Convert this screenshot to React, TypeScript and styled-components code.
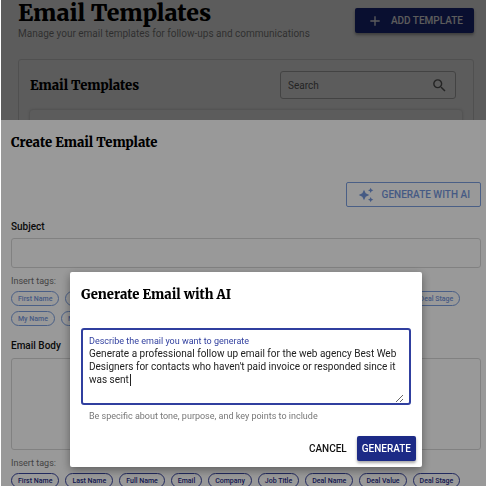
import React, { useState } from "react";
import styled, { createGlobalStyle } from "styled-components";

const serif = `Merriweather, "DejaVu Serif Condensed", "DejaVu Serif", serif`;

const GlobalStyle = createGlobalStyle`
  *, *::before, *::after { box-sizing: border-box; }
  body {
    margin: 0;
    background: #fff;
    color: #000;
    font-family: Roboto, "Liberation Sans", sans-serif;
    overflow: hidden;
  }
  button, input, textarea { font-family: inherit; }
  h1, h2, p { margin: 0; }
`;

const Page = styled.main`
  min-height: 100vh;
  padding: 0 12px 0 18px;
`;

const PageHeader = styled.header`
  display: flex;
  justify-content: space-between;
  align-items: flex-start;
`;

const PageTitle = styled.h1`
  font: 900 23px/26px ${serif};
  white-space: nowrap;
`;

const Subtitle = styled.p`
  font-size: 10px;
  line-height: 16px;
  color: rgba(0, 0, 0, 0.5);
  white-space: nowrap;
`;

const Button = styled.button<{ $kind: "solid" | "outline" | "text" }>`
  display: inline-flex;
  align-items: center;
  justify-content: center;
  height: 25px;
  padding: 0 10px 0 11px;
  border: 1px solid ${(p) => (p.$kind === "outline" ? "#7c9fe0" : "transparent")};
  border-radius: 2px;
  background: ${(p) => (p.$kind === "solid" ? "#1c2a86" : "transparent")};
  color: ${(p) => (p.$kind === "solid" ? "#fff" : p.$kind === "outline" ? "#7496dc" : "#111")};
  box-shadow: ${(p) => (p.$kind === "solid" ? "0 2px 3px rgba(0, 0, 0, 0.35)" : "none")};
  font-size: 10px;
  font-weight: 500;
  line-height: 16px;
  text-transform: uppercase;
  white-space: nowrap;
  cursor: pointer;
  svg { flex: none; margin-right: 8px; fill: currentColor; }
`;

const AddButton = styled(Button)`
  margin-top: 8px;
`;

const Card = styled.section`
  margin-top: 17px;
  padding: 11px;
  border: 1px solid #e0e0e0;
  border-radius: 3px;
`;

const CardHeader = styled.div`
  display: flex;
  justify-content: space-between;
  align-items: center;
  padding-right: 6px;
`;

const SectionTitle = styled.h2`
  padding-top: 2px;
  font: 900 13px/20px ${serif};
  white-space: nowrap;
`;

const SearchBox = styled.label`
  display: flex;
  align-items: center;
  width: 176px;
  height: 28px;
  padding: 0 7px;
  border: 1px solid #bdbdbd;
  border-radius: 3px;
  svg { flex: none; fill: #666; }
`;

const SearchInput = styled.input`
  flex: 1;
  min-width: 0;
  padding: 0;
  border: 0;
  outline: 0;
  background: none;
  font-size: 10px;
  &::placeholder { color: #666; opacity: 1; }
`;

const Paper = styled.div`
  height: 300px;
  margin-top: 11px;
  border-radius: 3px;
  box-shadow: 0 0 3px rgba(0, 0, 0, 0.25);
`;

const Layer = styled.div`
  position: fixed;
  inset: 0 0 0 1px;
  display: flex;
  justify-content: center;
  align-items: flex-end;
  background: rgba(0, 0, 0, 0.4);
`;

const DialogLayer = styled(Layer)`
  padding: 0 0 19px 5px;
`;

const Sheet = styled.section`
  width: 100%;
  height: calc(100% - 120px);
  padding: 11px 5px 0 10px;
  overflow: hidden;
  background: #fff;
`;

const SheetActions = styled.div`
  display: flex;
  justify-content: flex-end;
  margin-top: 29px;
`;

const Field = styled.div`
  display: flex;
  flex-direction: column;
  margin-top: 12px;
`;

const FieldLabel = styled.label`
  font-size: 10px;
  font-weight: 500;
  line-height: 16px;
  color: #111;
`;

const SubjectInput = styled.input`
  height: 30px;
  margin-top: 3px;
  padding: 0 8px;
  border: 1px solid #d8d8d8;
  border-radius: 3px;
  font-size: 10px;
`;

const BodyInput = styled.textarea`
  height: 92px;
  margin-top: 4px;
  padding: 8px;
  border: 1px solid #d8d8d8;
  border-radius: 3px;
  resize: none;
  font-size: 10px;
`;

const TagHint = styled.p`
  margin-top: 6px;
  font-size: 9px;
  line-height: 14px;
  color: #707070;
`;

const Tags = styled.div`
  display: flex;
  flex-wrap: wrap;
  gap: 5px 6px;
  margin-top: 3px;
  padding-right: 10px;
`;

const Tag = styled.button<{ $strong?: boolean }>`
  height: 15px;
  padding: 0 6px;
  border: 1px solid ${(p) => (p.$strong ? "#3a469e" : "#7c9fe0")};
  border-radius: 8px;
  background: none;
  color: ${(p) => (p.$strong ? "#1c2a86" : "#7496dc")};
  font-size: 7px;
  font-weight: 500;
  line-height: 12px;
  white-space: nowrap;
`;

const Dialog = styled.form`
  display: flex;
  flex-direction: column;
  width: 352px;
  padding: 11px 6px 6px 11px;
  border-radius: 2px;
  background: #fff;
  box-shadow: 0 3px 10px rgba(0, 0, 0, 0.4);
`;

const PromptBox = styled.div`
  position: relative;
  display: flex;
  flex-direction: column;
  margin: 23px 5px 0 0;
  padding: 5px 5px 0 6px;
  border: 2px solid #303f9f;
  border-radius: 3px;
`;

const PromptLabel = styled.label`
  font-size: 9px;
  line-height: 12px;
  color: #303f9f;
`;

const Prompt = styled.textarea<{ $edited: boolean }>`
  height: 56px;
  padding: 0;
  border: 0;
  outline: 0;
  background: none;
  color: #222;
  caret-color: ${(p) => (p.$edited ? "auto" : "transparent")};
  font-size: 10px;
  line-height: 13px;
  resize: vertical;
`;

/* Steady caret shown after the suggested prompt until the first edit. */
const Caret = styled.span`
  position: absolute;
  top: 44px;
  left: 47px;
  width: 1px;
  height: 12px;
  background: #222;
  pointer-events: none;
`;

const Helper = styled.p`
  margin: 4px 0 0 8px;
  font-size: 9px;
  line-height: 14px;
  color: #777;
`;

const DialogActions = styled.div`
  display: flex;
  justify-content: flex-end;
  gap: 5px;
  margin-top: 13px;
`;

const DialogButton = styled(Button)`
  padding: 0 4px;
`;

const names = ["First Name", "Last Name", "Full Name", "Email", "Company", "Job Title", "Deal Name", "Deal Value", "Deal Stage", "My Name", "My Email"];

const TagList = ({ strong }: { strong?: boolean }) => (
  <>
    <TagHint>Insert tags:</TagHint>
    <Tags>
      {names.map((name) => (
        <Tag key={name} type="button" $strong={strong}>{name}</Tag>
      ))}
    </Tags>
  </>
);

export default function App() {
  const [edited, setEdited] = useState(false);
  const [prompt, setPrompt] = useState(
    "Generate a professional follow up email for the web agency Best Web Designers for contacts who haven't paid invoice or responded since it was sent"
  );
  return (
    <>
      <GlobalStyle />
      <Page>
        <PageHeader>
          <div>
            <PageTitle>Email Templates</PageTitle>
            <Subtitle>Manage your email templates for follow-ups and communications</Subtitle>
          </div>
          <AddButton type="button" $kind="solid">
            <svg width="16" height="16" viewBox="0 0 24 24"><path d="M19 13h-6v6h-2v-6H5v-2h6V5h2v6h6z" /></svg>
            Add Template
          </AddButton>
        </PageHeader>
        <Card>
          <CardHeader>
            <SectionTitle>Email Templates</SectionTitle>
            <SearchBox>
              <SearchInput type="search" placeholder="Search" aria-label="Search" />
              <svg width="17" height="17" viewBox="0 0 24 24"><path d="M15.5 14h-.79l-.28-.27A6.47 6.47 0 0 0 16 9.5 6.5 6.5 0 1 0 9.5 16c1.61 0 3.09-.59 4.23-1.57l.27.28v.79l5 4.99L20.49 19zm-6 0C7.01 14 5 11.99 5 9.5S7.01 5 9.5 5 14 7.01 14 9.5 11.99 14 9.5 14" /></svg>
            </SearchBox>
          </CardHeader>
          <Paper />
        </Card>
      </Page>

      <Layer>
        <Sheet>
          <SectionTitle>Create Email Template</SectionTitle>
          <SheetActions>
            <Button type="button" $kind="outline">
              <svg width="16" height="16" viewBox="0 0 24 24"><path d="m19 9 1.25-2.75L23 5l-2.75-1.25L19 1l-1.25 2.75L15 5l2.75 1.25zm0 6-1.25 2.75L15 19l2.75 1.25L19 23l1.25-2.75L23 19l-2.75-1.25zM11.5 9.5 9 4 6.5 9.5 1 12l5.5 2.5L9 20l2.5-5.5L17 12z" /></svg>
              Generate with AI
            </Button>
          </SheetActions>
          <Field>
            <FieldLabel htmlFor="subject">Subject</FieldLabel>
            <SubjectInput id="subject" />
          </Field>
          <TagList />
          <Field>
            <FieldLabel htmlFor="body">Email Body</FieldLabel>
            <BodyInput id="body" />
          </Field>
          <TagList strong />
        </Sheet>
      </Layer>

      <DialogLayer>
        <Dialog role="dialog" aria-labelledby="ai-title" onSubmit={(e) => e.preventDefault()}>
          <SectionTitle id="ai-title">Generate Email with AI</SectionTitle>
          <PromptBox>
            <PromptLabel htmlFor="prompt">Describe the email you want to generate</PromptLabel>
            <Prompt
              id="prompt"
              autoFocus
              spellCheck={false}
              $edited={edited}
              value={prompt}
              onChange={(e) => {
                setEdited(true);
                setPrompt(e.target.value);
              }}
              onFocus={(e) => e.target.setSelectionRange(prompt.length, prompt.length)}
            />
            {!edited && <Caret aria-hidden="true" />}
          </PromptBox>
          <Helper>Be specific about tone, purpose, and key points to include</Helper>
          <DialogActions>
            <DialogButton type="button" $kind="text">Cancel</DialogButton>
            <DialogButton type="submit" $kind="solid">Generate</DialogButton>
          </DialogActions>
        </Dialog>
      </DialogLayer>
    </>
  );
}
